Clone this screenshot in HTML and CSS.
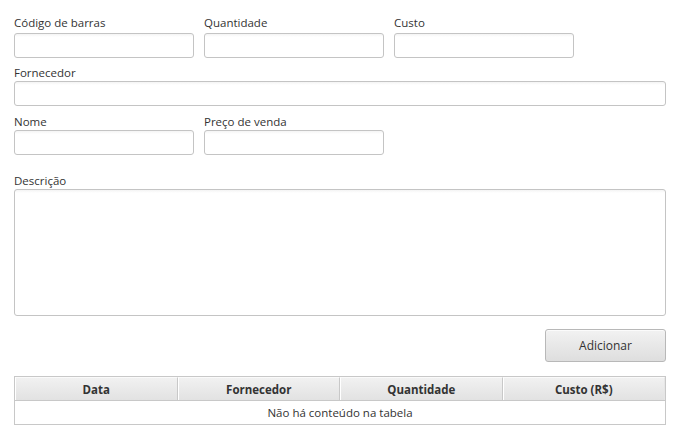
FILE: index.html
```html
<!DOCTYPE html>
<html lang="pt">
<head>
<meta charset="utf-8">
<link rel="stylesheet" href="styles.css">
</head>
<body>
<div class="form">
  <div class="row r1">
    <div class="field"><label class="lbl">Código de barras</label><div class="input"></div></div>
    <div class="field"><label class="lbl">Quantidade</label><div class="input"></div></div>
    <div class="field"><label class="lbl">Custo</label><div class="input"></div></div>
  </div>
  <div class="row r2">
    <div class="field wide"><label class="lbl">Fornecedor</label><div class="input"></div></div>
  </div>
  <div class="row r3">
    <div class="field"><label class="lbl">Nome</label><div class="input"></div></div>
    <div class="field"><label class="lbl">Preço de venda</label><div class="input"></div></div>
  </div>
  <div class="row r4">
    <div class="field wide"><label class="lbl">Descrição</label><div class="input area"></div></div>
  </div>
  <div class="actions"><button class="btn">Adicionar</button></div>
  <div class="table">
    <div class="thead">
      <div class="th">Data</div>
      <div class="th">Fornecedor</div>
      <div class="th">Quantidade</div>
      <div class="th">Custo (R$)</div>
    </div>
    <div class="empty">Não há conteúdo na tabela</div>
  </div>
</div>
</body>
</html>
```

FILE: styles.css
```css
* { box-sizing: border-box; }
html, body { margin: 0; padding: 0; background: #fff; }
body { font-family: "Open Sans", "Noto Sans", sans-serif; font-size: 11.5px; color: #333; }
.form { padding: 15px 14px 0 14px; width: 680px; }
.row { display: flex; gap: 10px; }
.r2 { margin-top: 7px; }
.r3 { margin-top: 8px; }
.r4 { margin-top: 18px; }
.field { display: flex; flex-direction: column; width: 180px; }
.field.wide { width: 652px; }
.lbl { display: block; height: 15px; line-height: 15px; margin-bottom: 1px; white-space: nowrap; }
.r1 .lbl { margin-bottom: 3px; }
.input {
  height: 25px;
  border: 1px solid #c4c4c4;
  border-radius: 3px;
  background: linear-gradient(#f4f4f4, #fff 3px);
}
.input.area { height: 127px; }
.actions { display: flex; justify-content: flex-end; margin-top: 13px; }
.btn {
  width: 121px; height: 33px;
  font: inherit; font-size: 12px; color: #333;
  border: 1px solid #b8b8b8;
  border-radius: 3px;
  background: linear-gradient(#f2f2f2, #dedede);
  box-shadow: inset 0 1px 0 #fbfbfb;
  padding: 0;
}
.table { margin-top: 14px; width: 652px; border: 1px solid #c8c8c8; }
.thead { display: grid; grid-template-columns: repeat(4, 1fr); height: 24px; border-bottom: 1px solid #c8c8c8; }
.th {
  display: flex; align-items: center; justify-content: center;
  font-weight: bold; color: #333;
  background: linear-gradient(#f1f1f1, #e2e2e2);
  border-left: 1px solid #fff;
  border-right: 1px solid #c8c8c8;
  border-top: 1px solid #fafafa;
}
.th:last-child { border-right: 1px solid #e6e6e6; }
.empty { height: 23px; display: flex; align-items: center; justify-content: center; color: #333; }
```
